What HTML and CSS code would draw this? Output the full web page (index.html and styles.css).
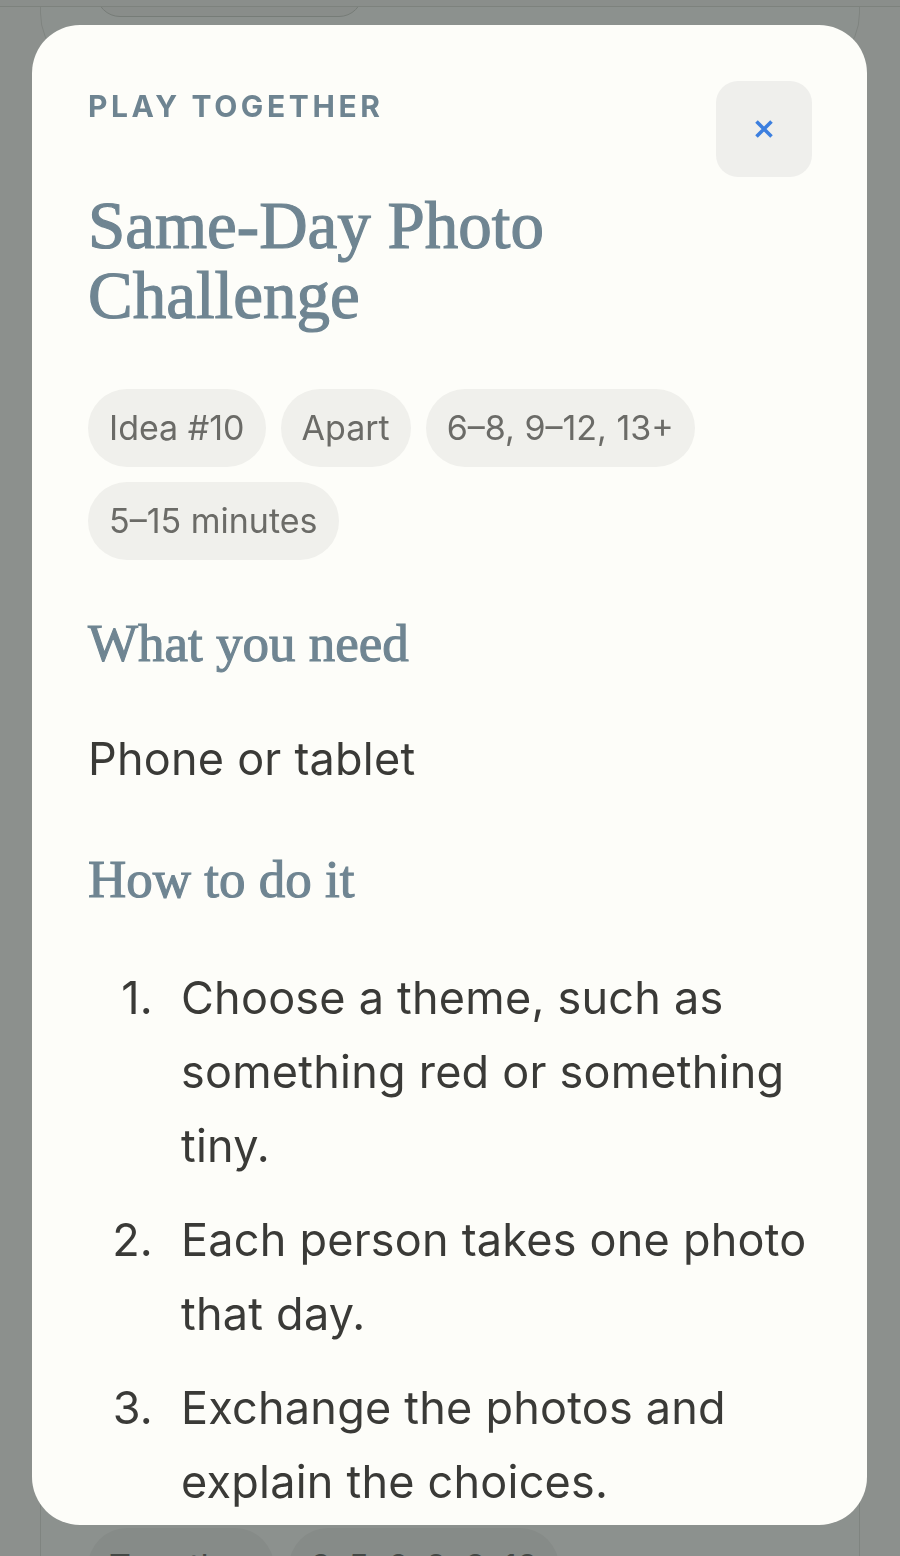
FILE: index.html
```html
<!DOCTYPE html>
<html lang="en">
<head>
<meta charset="utf-8">
<title>Same-Day Photo Challenge</title>
<link rel="stylesheet" href="styles.css">
</head>
<body>
  <header class="topbar"></header>

  <main class="feed">
    <article class="card card-prev">
      <div class="card-btn" aria-hidden="true"></div>
    </article>
    <article class="card card-next">
      <div class="tags">
        <span class="tag">Together</span>
        <span class="tag">3–5, 6–8, 9–12</span>
      </div>
    </article>
  </main>

  <div class="overlay">
    <section class="dialog" role="dialog" aria-labelledby="dialog-title">
      <div class="dialog-head">
        <div>
          <p class="eyebrow">PLAY TOGETHER</p>
          <h2 class="dialog-title" id="dialog-title">Same-Day Photo Challenge</h2>
        </div>
        <button class="close-btn" type="button" aria-label="Close">
          <svg width="22" height="22" viewBox="0 0 22 22" aria-hidden="true">
            <path d="M3.5 3.5 L18.5 18.5 M18.5 3.5 L3.5 18.5" stroke="#3c7fdf" stroke-width="3.6" stroke-linecap="butt" fill="none"/>
          </svg>
        </button>
      </div>

      <div class="tags">
        <span class="tag">Idea #10</span>
        <span class="tag">Apart</span>
        <span class="tag">6–8, 9–12, 13+</span>
        <span class="tag">5–15 minutes</span>
      </div>

      <h3 class="section-title">What you need</h3>
      <p class="body-text">Phone or tablet</p>

      <h3 class="section-title">How to do it</h3>
      <ol class="steps">
        <li>Choose a theme, such as something red or something tiny.</li>
        <li>Each person takes one photo that day.</li>
        <li>Exchange the photos and explain the choices.</li>
      </ol>
    </section>
  </div>
</body>
</html>
```

FILE: styles.css
```css
*, *::before, *::after {
  box-sizing: border-box;
}

html, body {
  margin: 0;
  padding: 0;
}

body {
  background: #faf9f5;
  font-family: Inter, "Noto Sans", sans-serif;
  color: #3a3a37;
  height: 1556px;
  overflow: hidden;
}

/* page underneath the dialog */
.topbar {
  height: 7px;
  background: #f6f5f0;
  border-bottom: 1px solid #dcdcd5;
  position: relative;
  z-index: 1;
}

.feed {
  margin-top: -123px;
  padding: 0 40px;
  display: flex;
  flex-direction: column;
  gap: 20px;
}

.card {
  border: 1px solid #e0e0da;
  border-radius: 62px;
  background: #fbfaf6;
}

.card-prev {
  height: 191px;
  padding: 0 0 57px 55px;
  display: flex;
  align-items: flex-end;
}

.card-btn {
  width: 267px;
  height: 60px;
  border: 1px solid #cfd0c9;
  border-radius: 0 0 24px 24px;
  background: #f4f3ee;
}

.card-next {
  height: 1700px;
  padding: 1432px 0 0 47px;
}

/* dialog */
.overlay {
  position: fixed;
  inset: 0;
  background: rgba(30, 40, 38, 0.5);
  z-index: 5;
}

.dialog {
  position: absolute;
  left: 32px;
  top: 25px;
  width: 835px;
  height: 1500px;
  border-radius: 48px;
  background: #fdfdf9;
  padding: 56px;
  overflow: hidden;
}

.dialog-head {
  display: flex;
  justify-content: space-between;
  align-items: flex-start;
  gap: 24px;
}

.eyebrow {
  margin: 0;
  padding-top: 7px;
  font-size: 30px;
  line-height: 36px;
  font-weight: 700;
  letter-spacing: 0.12em;
  color: #6e8491;
}

.dialog-title {
  margin: 66px 0 0;
  font-family: "Liberation Serif", "DejaVu Serif", serif;
  font-weight: 400;
  font-size: 67px;
  line-height: 70px;
  color: #6f8592;
  -webkit-text-stroke: 1.2px #6f8592;
  max-width: 520px;
}

.close-btn {
  flex: none;
  width: 96px;
  height: 96px;
  border: none;
  border-radius: 22px;
  background: #efefec;
  display: flex;
  align-items: center;
  justify-content: center;
  padding: 0;
  margin-right: -1px;
}

.tags {
  display: flex;
  flex-wrap: wrap;
  gap: 15px;
  max-width: 620px;
}

.dialog .tags {
  margin-top: 59px;
}

.tag {
  display: inline-block;
  padding: 17px 21px;
  font-size: 34px;
  line-height: 44px;
  border-radius: 40px;
  background: #f0f0ec;
  color: #6b6b67;
}

.card-next .tag {
  background: #eeeeea;
}

.section-title {
  margin: 51px 0 0;
  font-family: "Liberation Serif", "DejaVu Serif", serif;
  font-weight: 400;
  font-size: 53px;
  line-height: 64px;
  color: #6f8592;
  -webkit-text-stroke: 1.1px #6f8592;
}

.body-text {
  margin: 47px 0 0;
  font-size: 45px;
  line-height: 74px;
  letter-spacing: 0.005em;
  color: #3a3a37;
}

/* numbered steps: right-aligned counter in the gutter */
.steps {
  margin: 50px 0 0;
  padding: 0;
  list-style: none;
  counter-reset: step;
  font-size: 45px;
  line-height: 74px;
  letter-spacing: 0.005em;
  color: #3a3a37;
}

.steps li {
  counter-increment: step;
  display: flex;
}

.steps li::before {
  content: counter(step) ".";
  flex: none;
  width: 93px;
  padding-right: 28px;
  text-align: right;
}

.steps li + li {
  margin-top: 20px;
}
```
